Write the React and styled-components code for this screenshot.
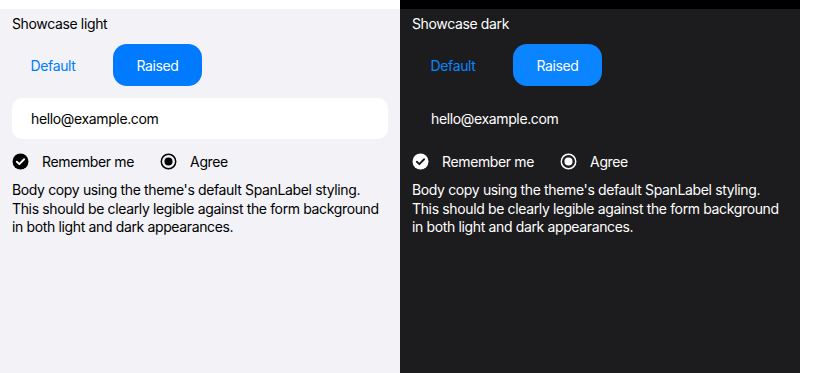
import React from "react";
import styled, { createGlobalStyle } from "styled-components";

const Global = createGlobalStyle`
  html, body { margin: 0; padding: 0; background: #ffffff; }
  body {
    font-family: Inter, "Noto Sans", "Liberation Sans", sans-serif;
    letter-spacing: -0.36px;
  }
`;

const themes = {
  light: {
    strip: "#ffffff",
    bg: "#f2f2f7",
    text: "#000000",
    accent: "#007aff",
    field: "#ffffff",
    iconFg: "#000000",
    iconMark: "#ffffff",
  },
  dark: {
    strip: "#000000",
    bg: "#1c1c1e",
    text: "#ffffff",
    accent: "#0a84ff",
    field: "#1c1c1e",
    iconFg: "#ffffff",
    iconMark: "#1c1c1e",
  },
};

const Page = styled.div`
  display: flex;
  width: 820px;
  height: 373px;
`;

const Panel = styled.section`
  width: 400px;
  height: 373px;
  display: flex;
  flex-direction: column;
  background: ${(p) => p.$t.bg};
  color: ${(p) => p.$t.text};
`;

const Strip = styled.div`
  height: 9px;
  flex: none;
  background: ${(p) => p.$t.strip};
`;

const Form = styled.div`
  display: flex;
  flex-direction: column;
  padding: 0 12px;
`;

const Title = styled.div`
  height: 28px;
  line-height: 30px;
  font-size: 14px;
`;

const ButtonRow = styled.div`
  display: flex;
  gap: 19px;
  margin-top: 7px;
`;

const Button = styled.button`
  height: 42px;
  border: none;
  border-radius: 14px;
  font-family: inherit;
  letter-spacing: inherit;
  font-size: 14px;
  padding: 0;
  width: ${(p) => (p.$raised ? "89px" : "82px")};
  background: ${(p) => (p.$raised ? p.$t.accent : "transparent")};
  color: ${(p) => (p.$raised ? "#ffffff" : p.$t.accent)};
`;

const Field = styled.div`
  margin-top: 12px;
  height: 41px;
  border-radius: 10px;
  background: ${(p) => p.$t.field};
  display: flex;
  align-items: center;
  padding-left: 19px;
  font-size: 14px;
`;

const OptionRow = styled.div`
  display: flex;
  align-items: center;
  height: 24px;
  margin-top: 10px;
`;

const Option = styled.label`
  display: flex;
  align-items: center;
  gap: 13px;
  font-size: 14px;
  margin-right: ${(p) => p.$gap || 0}px;
`;

const Icon = styled.svg`
  width: 17px;
  height: 17px;
  flex: none;
`;

const Body = styled.p`
  margin: 8px 0 0;
  font-size: 14px;
  line-height: 18.5px;
`;

function Showcase({ name, t }) {
  return (
    <Panel $t={t}>
      <Strip $t={t} />
      <Form>
        <Title>Showcase {name}</Title>
        <ButtonRow>
          <Button $t={t}>Default</Button>
          <Button $t={t} $raised>Raised</Button>
        </ButtonRow>
        <Field $t={t}>hello@example.com</Field>
        <OptionRow>
          <Option $gap={26}>
            <Icon viewBox="0 0 16 16">
              <circle cx="8" cy="8" r="7.5" fill={t.iconFg} />
              <path d="M4.6 8.2l2.3 2.3 4.5-4.6" fill="none" stroke={t.iconMark} strokeWidth="1.8" strokeLinecap="round" strokeLinejoin="round" />
            </Icon>
            Remember me
          </Option>
          <Option>
            <Icon viewBox="0 0 16 16">
              <circle cx="8" cy="8" r="6.8" fill="none" stroke={t.iconFg} strokeWidth="1.4" />
              <circle cx="8" cy="8" r="3.8" fill={t.iconFg} />
            </Icon>
            Agree
          </Option>
        </OptionRow>
        <Body>
          Body copy using the theme's default SpanLabel styling. This should be clearly legible against the form background in both light and dark appearances.
        </Body>
      </Form>
    </Panel>
  );
}

export default function App() {
  return (
    <>
      <Global />
      <Page>
        <Showcase name="light" t={themes.light} />
        <Showcase name="dark" t={themes.dark} />
      </Page>
    </>
  );
}
